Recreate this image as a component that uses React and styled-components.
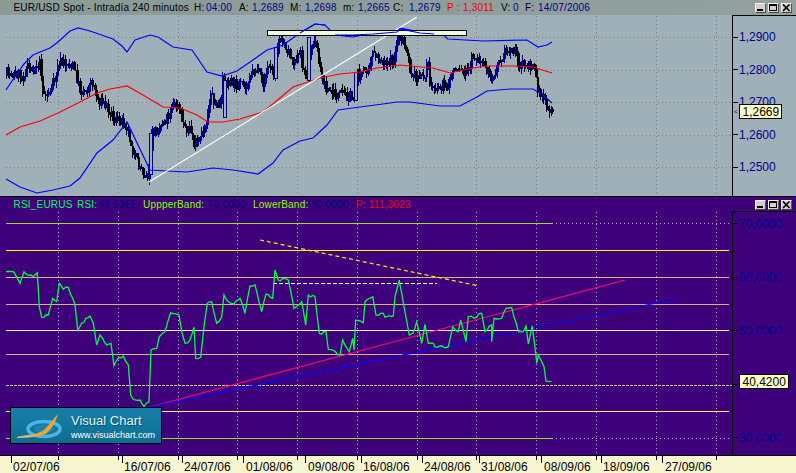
import React from "react";
import styled, { createGlobalStyle } from "styled-components";

const GlobalStyle = createGlobalStyle`
  html, body { margin: 0; padding: 0; background: #9fb0b8; }
  #root { width: 796px; height: 473px; overflow: hidden; }
`;

const SANS = `"Liberation Sans", Arial, sans-serif`;
const NAVY = "#00008b";

const Frame = styled.div`
  width: 796px; height: 473px; display: flex; flex-direction: column;
  font-family: ${SANS}; overflow: hidden; position: relative;
`;
const PriceWindow = styled.section`
  height: 196px; display: flex; flex-direction: column; background: #9fb0b8;
`;
const OscWindow = styled.section`
  height: 259px; display: flex; flex-direction: column; background: #3f007c;
  border-top: 1px solid #000; box-sizing: border-box;
`;
const TitleBar = styled.header`
  display: flex; align-items: center; padding-left: 13.5px; box-sizing: border-box;
  height: ${p => p.$h}px; flex: none; position: relative;
  background: ${p => p.$bg};
`;
const Field = styled.span`
  display: block; flex: none; white-space: nowrap; font-size: 10px; letter-spacing: .2px;
  width: ${p => p.$w ? p.$w + "px" : "auto"}; color: ${p => p.$c};
`;
const WinButtons = styled.div`
  position: absolute; right: 4px; top: ${p => p.$top}px; display: flex; gap: 2px;
`;
const WinButton = styled.div`
  width: 11px; height: 10px; box-sizing: border-box; background: #d4d0c8;
  border: 1px solid; border-color: #f4f4f0 #555 #444 #f4f4f0;
  display: flex; align-items: center; justify-content: center;
  svg { display: block; }
`;
const Body = styled.div`flex: 1; display: flex; min-height: 0;`;
const PlotSvg = styled.svg`display: block; width: 732px; flex: none;`;
const Axis = styled.aside`
  flex: 1; box-sizing: border-box; position: relative;
  border-left: 1px solid #000; border-top: 1px solid #000;
  display: flex; flex-direction: column;
  padding-top: ${p => p.$pad}px; gap: ${p => p.$gap}px;
`;
const AxisRow = styled.div`
  height: 14px; display: flex; align-items: center; gap: 1px; font-size: 12px; color: ${NAVY};
  &::before { content: ""; width: 5px; height: 1px; background: #000; }
`;
const PriceTag = styled.div`
  position: absolute; left: 6px; top: ${p => p.$top}px; height: 15px; box-sizing: border-box;
  border: 1px solid #000; background: #ffffc8; color: #000; font-size: 12px; line-height: 14px;
  padding: 0 2px 0 2.5px; white-space: nowrap;
  &::before {
    content: "<"; position: absolute; left: -6px; top: 0; font-size: 7px; line-height: 14px; color: #222;
  }
`;
const DateAxis = styled.footer`
  height: 18px; flex: none; background: #f8f6d0; border-top: 1px solid #000; box-sizing: border-box;
  position: relative; display: flex; padding-left: 13px; overflow: hidden;
`;
const DateTicks = styled.svg`position: absolute; left: 0; top: 0;`;
const DateLabel = styled.span`
  display: block; flex: none; width: ${p => p.$w}px; font-size: 12px; color: #000; line-height: 11px; padding-top: 6px;
`;
const Logo = styled.div`
  position: absolute; left: 10px; top: 407px; width: 152px; height: 37px; box-sizing: border-box;
  border: 1px solid #000; color: #fff; padding: 5px 0 0 60px;
  background: linear-gradient(180deg, #1a7da8 0%, #12789f 50%, #0f6c90 100%);
  svg { position: absolute; left: 0; top: 0; }
`;
const LogoName = styled.div`
  font-size: 13px; line-height: 15px; text-shadow: 1px 1px 1px #0a4a66; color: #e4f1f6;
`;
const LogoUrl = styled.div`
  font-size: 9px; line-height: 11px; margin-top: 2px;
`;

function rng(seed) {
  let a = seed;
  return () => {
    a |= 0; a = (a + 0x6d2b79f5) | 0;
    let t = Math.imul(a ^ (a >>> 15), 1 | a);
    t = (t + Math.imul(t ^ (t >>> 7), 61 | t)) ^ t;
    return ((t ^ (t >>> 14)) >>> 0) / 4294967296;
  };
}
const pts = a => a.map(p => p.join(",")).join(" ");
const interp = (list, x) => {
  for (let i = 1; i < list.length; i++) {
    if (x <= list[i][0]) {
      const [x0, y0] = list[i - 1], [x1, y1] = list[i];
      return y0 + ((y1 - y0) * (x - x0)) / (x1 - x0 || 1);
    }
  }
  return list[list.length - 1][1];
};

const upper = [[6,90],[14,78],[24,64],[33,55],[40,52],[50,48],[58,42],[70,31],[78,28],[90,31],[113,39],[122,46],[127,52],[135,40],[150,35],[158,37],[173,47],[192,50],[207,72],[222,76],[237,71],[253,60],[267,50],[283,45],[300,33],[315,24],[325,25],[335,35],[353,37],[373,33],[397,32],[400,28],[420,32],[443,35],[448,39],[483,41],[527,40],[538,47],[547,45],[552,42]];
const middle = [[6,135],[20,127],[40,121],[58,113],[80,102],[97,93],[110,89],[127,86],[143,95],[163,107],[180,108],[197,115],[208,122],[223,122],[240,119],[263,112],[280,98],[293,87],[320,78],[340,74],[360,72],[377,68],[400,65],[410,66],[433,68],[450,73],[473,68],[487,66],[513,66],[533,67],[552,73]];
const lower = [[6,179],[20,187],[37,193],[53,190],[70,186],[80,178],[97,153],[113,140],[127,122],[150,170],[167,171],[187,172],[213,168],[233,170],[258,174],[273,163],[283,150],[300,141],[313,138],[327,125],[338,110],[360,107],[383,104],[397,102],[410,102],[440,106],[460,106],[477,97],[487,91],[510,89],[533,89],[543,95],[552,103]];
const price = [[6,73],[17,74],[22,76],[27,68],[33,69],[37,62],[40,65],[42,90],[45,96],[50,90],[55,78],[58,62],[65,63],[72,66],[76,77],[80,92],[87,88],[92,80],[97,100],[103,103],[110,110],[113,120],[120,120],[125,122],[130,140],[133,155],[138,165],[143,172],[148,176],[151,135],[160,125],[168,115],[172,103],[178,108],[183,125],[190,130],[193,145],[198,143],[205,125],[210,92],[215,105],[220,107],[222,82],[232,83],[240,85],[245,90],[248,75],[256,68],[262,85],[268,65],[273,75],[277,40],[285,45],[292,60],[300,55],[305,80],[310,42],[316,45],[320,75],[327,90],[335,95],[345,95],[352,98],[357,75],[365,70],[372,55],[378,60],[385,60],[393,62],[398,32],[405,50],[410,73],[422,80],[427,63],[430,87],[448,85],[453,67],[467,73],[472,55],[480,62],[492,80],[497,58],[505,52],[513,48],[518,63],[528,67],[533,62],[537,90],[542,95],[546,110],[548,113],[553,112]];

const makeCandles = () => {
  const r = rng(7);
  const out = [];
  let prev = 73;
  for (let x = 6; x < 553; x += 1.5) {
    const close = interp(price, x) + (r() - 0.5) * 12;
    const top = Math.min(prev, close), bot = Math.max(prev, close);
    out.push({ x, top, bot: Math.max(bot, top + 1.5), hi: top - r() * 6, lo: bot + r() * 6, up: close < prev });
    prev = close;
  }
  return out;
};
const candles = makeCandles();
const hollow = [[151,133,174],[225,80,117],[276,47,78],[309,37,80],[356,72,100]];

const rsiA = [[18,215],[40,215],[60,250],[72,215],[100,230],[112,218],[118,320],[125,352],[145,345],[158,295],[170,305],[178,250],[190,268],[205,262],[225,315],[233,390],[245,370],[270,348],[280,370],[290,435],[300,405],[320,435],[333,430],[342,497],[350,480],[370,468],[385,495],[392,585],[405,600],[420,600],[432,620],[447,605],[453,450],[470,445],[478,410],[495,395],[512,338],[537,345],[545,395],[555,430],[570,420],[582,382],[587,475],[602,472],[612,380],[622,310],[635,305],[650,370],[665,350],[672,285],[685,305],[702,312],[720,295],[735,340],[750,258],[765,255],[785,335],[798,282],[818,295],[825,210],[835,240],[865,240],[882,325],[905,305],[917,375],[925,285],[945,290],[958,400],[978,395],[985,448],[1020,465],[1028,420],[1048,455],[1058,415],[1062,450],[1067,360],[1090,368],[1095,305],[1118,290],[1128,345],[1150,340],[1155,352],[1180,348],[1185,290],[1198,240]];
const rsiB = [[0,255],[12,320],[28,405],[38,400],[50,365],[65,430],[75,373],[85,430],[100,430],[105,440],[145,440],[158,380],[175,395],[182,360],[198,425],[205,350],[222,355],[245,340],[255,395],[275,375],[275,425],[282,355],[305,355],[318,325],[335,323],[355,395],[370,395],[378,378],[385,432],[397,378],[407,460],[410,490],[415,465],[432,500],[438,543],[455,544]];
const rsi = [...rsiA.map(([x, y]) => [x / 3, 200 + y / 3]), ...rsiB.map(([x, y]) => [400 + x / 3, 200 + y / 3])];
const makeRsi = () => {
  const r = rng(21);
  const out = [];
  for (let i = 0; i < rsi.length - 1; i++) {
    const [x0, y0] = rsi[i], [x1, y1] = rsi[i + 1];
    const n = Math.max(1, Math.floor((x1 - x0) / 2));
    for (let k = 0; k < n; k++) {
      const t = k / n;
      const jitter = k === 0 ? 0 : (r() - 0.5) * 3;
      out.push([+(x0 + (x1 - x0) * t).toFixed(1), +(y0 + (y1 - y0) * t + jitter).toFixed(1)]);
    }
  }
  out.push(rsi[rsi.length - 1]);
  return out;
};
const rsiLine = makeRsi();

const gridX = [58,118,178,237,297,357,417,476,536,596,656,716];
const priceY = [37,70,102,135,167];
const levels = [
  { y: 223.5, c: "#99dd33", end: 552, ext: true },
  { y: 250.5, c: "#ffff00", end: 729 },
  { y: 277.5, c: "#d4b878", end: 729 },
  { y: 304.5, c: "#d4b878", end: 729 },
  { y: 330.5, c: "#ffffff", end: 729 },
  { y: 354.5, c: "#d4b878", end: 729 },
  { y: 411.5, c: "#f4ee60", end: 729 },
  { y: 438.5, c: "#88ee00", end: 552, ext: true },
];

const PricePlot = () => (
  <PlotSvg viewBox="0 15 732 181" height="181">
    {gridX.map(x => <line key={x} x1={x + .5} x2={x + .5} y1="16" y2="196" stroke="#7f8078" strokeDasharray="1 3" />)}
    {priceY.map(y => <line key={y} x1="6" x2="732" y1={y + .5} y2={y + .5} stroke="#7f7a70" strokeDasharray="1 3" />)}
    <g shapeRendering="crispEdges">
      {candles.map((c, i) => (
        <g key={i} fill={c.up ? NAVY : "#000"} stroke="none">
          <rect x={c.x} y={c.hi} width="1" height={c.lo - c.hi} />
          <rect x={c.x - .5} y={c.top} width="2.5" height={c.bot - c.top} />
        </g>
      ))}
      {hollow.map(([x, a, b]) => (
        <rect key={x} x={x - 1.5} y={a} width="3" height={b - a} fill="#9fb0b8" stroke={NAVY} strokeWidth="1" />
      ))}
    </g>
    <g fill="none" strokeWidth="1.2">
      <polyline points={pts(upper)} stroke="#0000ff" />
      <polyline points={pts(middle)} stroke="#ff0000" />
      <polyline points={pts(lower)} stroke="#0000ff" />
      <line x1="149" y1="182" x2="417" y2="17" stroke="#fff" />
      <rect x="267.5" y="30.5" width="199" height="5" fill="#eeffe0" stroke="#000" strokeWidth="1" />
      <polyline points={pts(upper.filter(p => p[0] >= 300 && p[0] <= 332))} stroke="#0000ff" />
      <polyline points="335,35 353,35 373,34 397,32 400,29 420,33 434,34" stroke="#0000ff" />
    </g>
  </PlotSvg>
);

const OscPlot = () => (
  <PlotSvg viewBox="0 211 732 243" height="243">
    {gridX.map(x => <line key={x} x1={x + .5} x2={x + .5} y1="212" y2="454" stroke="#b8a8c8" strokeDasharray="1 3" />)}
    {levels.map(l => (
      <g key={l.y}>
        <line x1="6" x2={l.end} y1={l.y} y2={l.y} stroke={l.c} strokeWidth="1" />
        {l.ext && <line x1={l.end} x2="732" y1={l.y} y2={l.y} stroke="#b8a8c8" strokeDasharray="1 3" />}
      </g>
    ))}
    <line x1="6" x2="732" y1="385.5" y2="385.5" stroke="#d4c8a0" strokeDasharray="3 1" />
    <g fill="none" strokeWidth="1.2">
      <line x1="150" y1="407" x2="625" y2="280" stroke="#ff0070" />
      <line x1="150" y1="407" x2="676" y2="299" stroke="#0000ff" />
      <line x1="260" y1="240" x2="479" y2="286" stroke="#ffee00" strokeDasharray="4 3" />
      <line x1="273" y1="283.5" x2="437" y2="283.5" stroke="#fff" strokeDasharray="4 2" />
      <polyline points={pts(rsiLine)} stroke="#00ff44" strokeWidth="1.3" />
    </g>
  </PlotSvg>
);

const Buttons = ({ top }) => (
  <WinButtons $top={top}>
    <WinButton><svg width="7" height="6"><rect x="0" y="4" width="6" height="2" fill="#000" /></svg></WinButton>
    <WinButton><svg width="9" height="8"><rect x=".5" y=".5" width="7" height="6" fill="none" stroke="#000" /><rect x="0" y="0" width="8" height="2" fill="#000" /></svg></WinButton>
    <WinButton><svg width="9" height="8"><path d="M1 0.5 L7.5 7 M7.5 0.5 L1 7" stroke="#000" strokeWidth="1.6" /></svg></WinButton>
  </WinButtons>
);

const topFields = [
  ["EUR/USD Spot - Intradía 240 minutos", "#000", 180.5],
  ["H:", "#000", 12], ["04:00", NAVY, 33], ["A:", "#000", 13], ["1,2689", NAVY, 38],
  ["M:", "#000", 15], ["1,2698", NAVY, 38], ["m:", "#000", 15], ["1,2665", NAVY, 35],
  ["C:", "#000", 16], ["1,2679", NAVY, 38], ["P :", "#f00000", 16], ["1,3011", "#f00000", 38],
  ["V:", "#000", 12], ["0", NAVY, 12], ["F:", "#000", 13], ["14/07/2006", NAVY, 0],
];
const oscFields = [
  ["RSI_EURUS", "#00ff55", 63.5], ["RSI:", "#00ff55", 22], ["46,5362", "#00007f", 44],
  ["UppperBand:", "#88ff00", 65], ["70,0000", "#00007f", 45], ["LowerBand:", "#88ff00", 58],
  ["30,0000", "#00007f", 45], ["P: 111,3023", "#f00000", 0],
];
const dates = [["02/07/06",111],["16/07/06",60],["24/07/06",62],["01/08/06",62],["09/08/06",55],["16/08/06",61],["24/08/06",57],["31/08/06",63],["08/09/06",59],["18/09/06",62],["27/09/06",60]];
const majorTicks = [11,122,182,243,305,361,422,479,541,601,662];

export default function App() {
  return (
    <Frame>
      <GlobalStyle />
      <PriceWindow>
        <TitleBar $h={15} $bg="linear-gradient(90deg,#8a9a96 0%,#92a19f 100%)">
          {topFields.map(([t, c, w]) => <Field key={t + w} $c={c} $w={w}>{t}</Field>)}
          <Buttons top={3} />
        </TitleBar>
        <Body>
          <PricePlot />
          <Axis $pad={14} $gap={18.5}>
            {["1,2900","1,2800","1,2700","1,2600","1,2500"].map(v => <AxisRow key={v}>{v}</AxisRow>)}
            <PriceTag $top={88}>1,2669</PriceTag>
          </Axis>
        </Body>
      </PriceWindow>
      <OscWindow>
        <TitleBar $h={14} $bg="#3f007c">
          {oscFields.map(([t, c, w]) => <Field key={t} $c={c} $w={w}>{t}</Field>)}
          <Buttons top={3} />
        </TitleBar>
        <Body>
          <OscPlot />
          <Axis $pad={4.5} $gap={39.6}>
            {["70,0000","60,0000","50,0000","40,0000","30,0000"].map(v => <AxisRow key={v}>{v}</AxisRow>)}
            <PriceTag $top={162}>40,4200</PriceTag>
          </Axis>
        </Body>
      </OscWindow>
      <DateAxis>
        <DateTicks width="796" height="18">
          {majorTicks.map(x => <rect key={x} x={x} y="0" width="1" height="7" fill="#000" />)}
          {gridX.map(x => <rect key={x} x={x} y="0" width="1" height="4" fill="#000" />)}
        </DateTicks>
        {dates.map(([d, w]) => <DateLabel key={d} $w={w}>{d}</DateLabel>)}
      </DateAxis>
      <Logo>
        <svg width="60" height="35" viewBox="0 0 60 35">
          <ellipse cx="33" cy="21" rx="16" ry="7.5" fill="none" stroke="#4db4e6" strokeWidth="3.5" />
          <ellipse cx="33" cy="21" rx="10" ry="4.5" fill="#1b83b4" />
          <path d="M6 29 C18 26 28 27 34 21 C39 16 42 11 47 6 C45 13 42 19 37 24 C31 30 18 29 6 30 Z" fill="#f2a62e" />
          <path d="M6 29 C12 27.5 18 27.5 24 28 C18 29.5 12 29.5 6 30 Z" fill="#b9c49a" />
        </svg>
        <LogoName>Visual Chart</LogoName>
        <LogoUrl>www.visualchart.com</LogoUrl>
      </Logo>
    </Frame>
  );
}
